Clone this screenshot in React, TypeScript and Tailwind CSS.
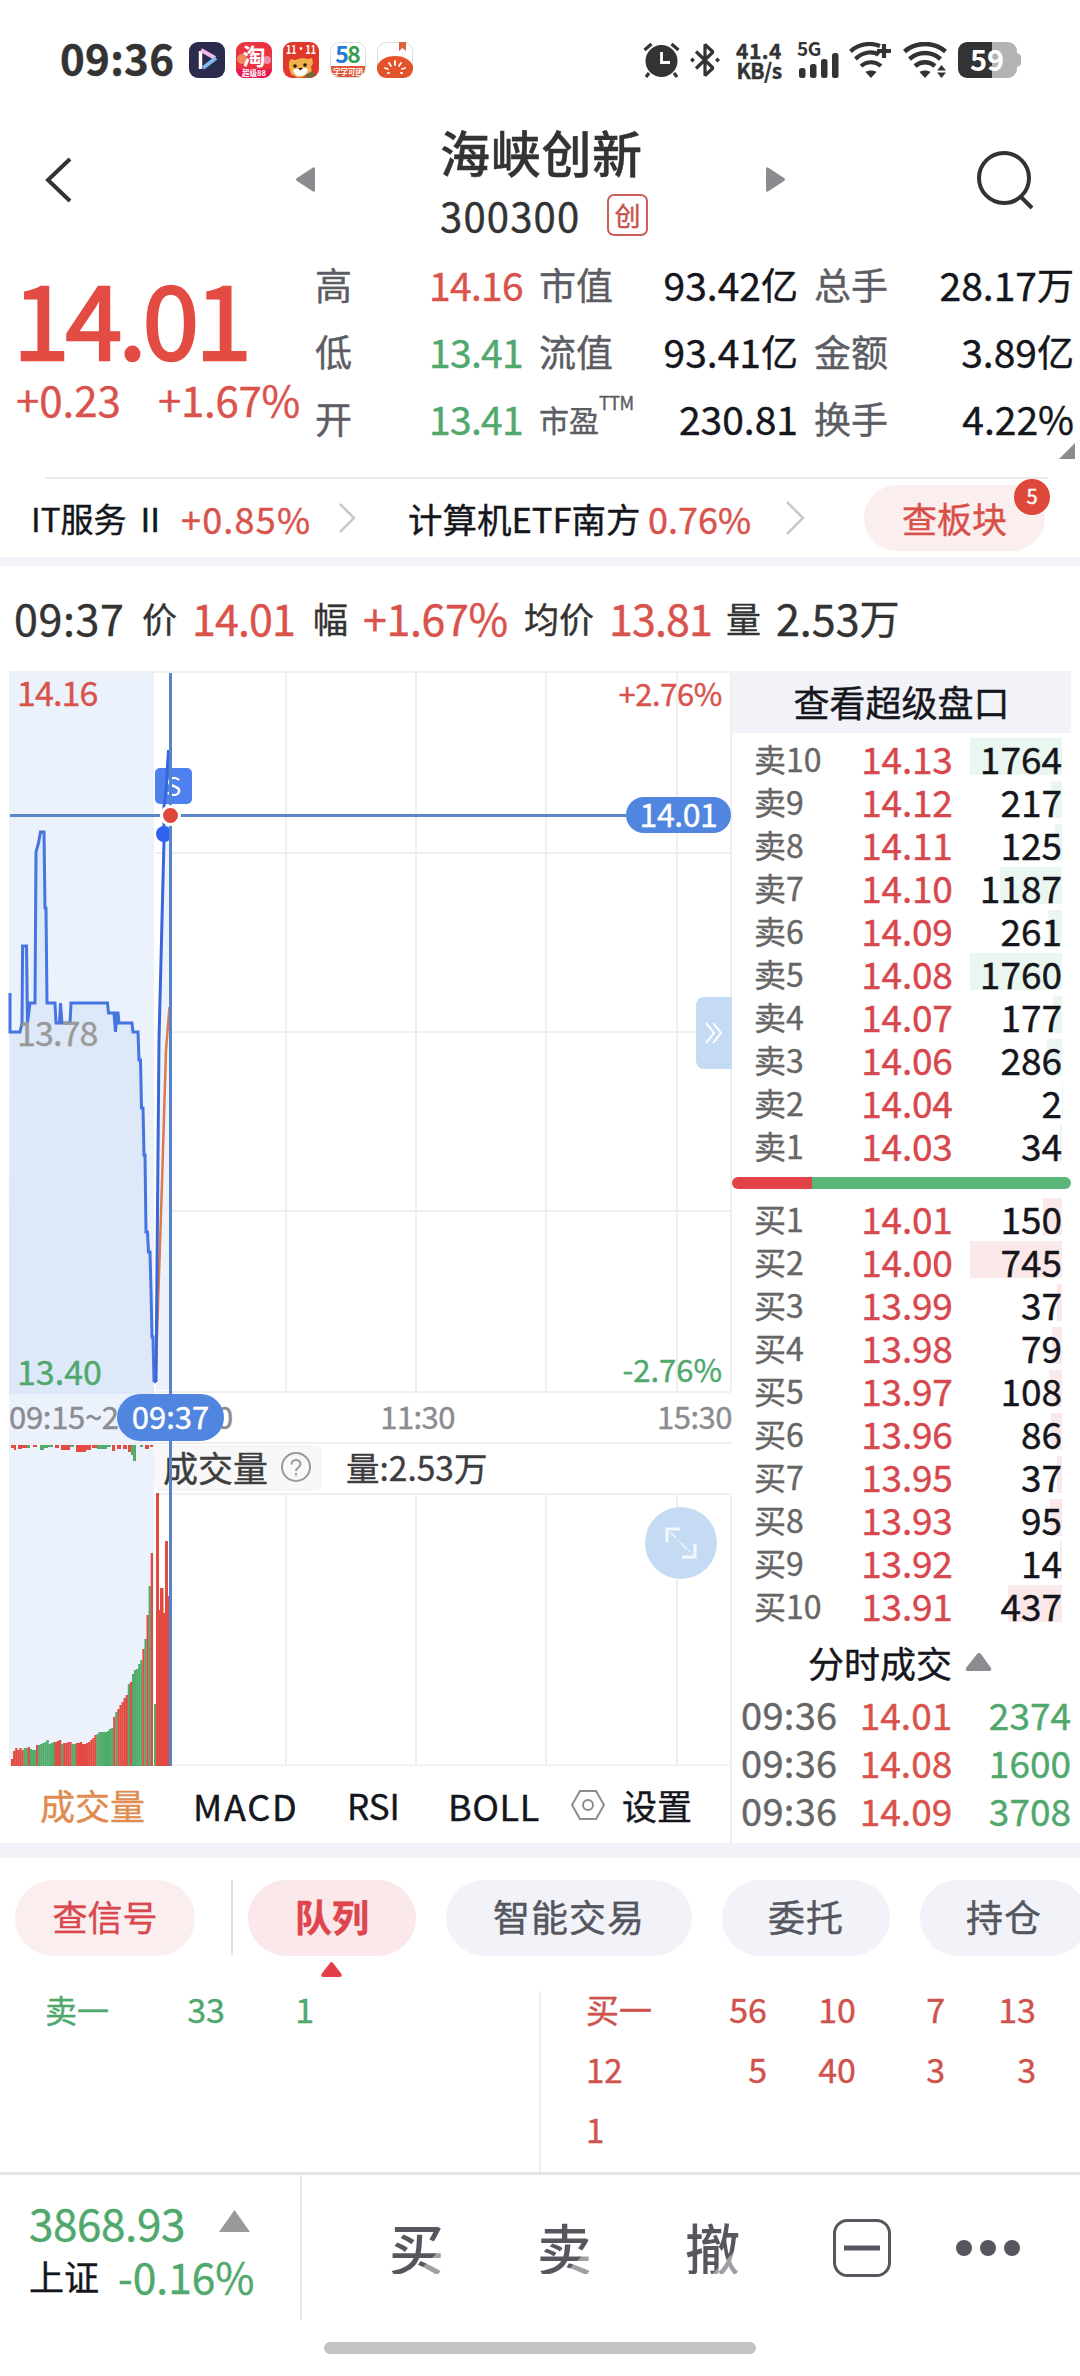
import type { ReactNode } from "react";
import clsx from "clsx";

interface Level {
  label: string;
  price: string;
  qty: number;
}

const sells: Level[] = [
  { label: "卖10", price: "14.13", qty: 1764 },
  { label: "卖9", price: "14.12", qty: 217 },
  { label: "卖8", price: "14.11", qty: 125 },
  { label: "卖7", price: "14.10", qty: 1187 },
  { label: "卖6", price: "14.09", qty: 261 },
  { label: "卖5", price: "14.08", qty: 1760 },
  { label: "卖4", price: "14.07", qty: 177 },
  { label: "卖3", price: "14.06", qty: 286 },
  { label: "卖2", price: "14.04", qty: 2 },
  { label: "卖1", price: "14.03", qty: 34 },
];

const buys: Level[] = [
  { label: "买1", price: "14.01", qty: 150 },
  { label: "买2", price: "14.00", qty: 745 },
  { label: "买3", price: "13.99", qty: 37 },
  { label: "买4", price: "13.98", qty: 79 },
  { label: "买5", price: "13.97", qty: 108 },
  { label: "买6", price: "13.96", qty: 86 },
  { label: "买7", price: "13.95", qty: 37 },
  { label: "买8", price: "13.93", qty: 95 },
  { label: "买9", price: "13.92", qty: 14 },
  { label: "买10", price: "13.91", qty: 437 },
];

const trades = [
  { time: "09:36", price: "14.01", qty: "2374" },
  { time: "09:36", price: "14.08", qty: "1600" },
  { time: "09:36", price: "14.09", qty: "3708" },
];

const buyQueue = [
  ["买一", "56", "10", "7", "13"],
  ["12", "5", "40", "3", "3"],
  ["1", "", "", "", ""],
];

// Call auction volume: bar heights and their colours (r = up, g = down)
const auctionHeights = [
  7, 15, 18, 16, 18, 16, 18, 18, 19, 17, 16, 16, 21, 21, 22, 23, 24, 26, 22, 23,
  24, 24, 25, 26, 22, 23, 23, 24, 24, 22, 22, 23, 23, 24, 22, 22, 23, 24, 26, 28,
  31, 32, 34, 34, 34, 34, 35, 37, 38, 49, 54, 57, 61, 64, 68, 71, 82, 84, 92, 96,
  97, 102, 106, 117, 127, 151, 180, 213,
];
const auctionColors =
  "rrrrrrggrgggrggggggggrrrgrrrrggrrrrrrrrrrggggggggrgrrrrrgrgggggrgrgr";

// Unmatched volume hanging from the top edge
const unmatched: [number, number, number, string][] = [
  [11, 4, 3, "r"], [14, 2, 5, "r"], [18, 4, 4, "r"], [22, 5, 3, "r"],
  [27, 3, 3, "g"], [33, 4, 2, "r"], [40, 4, 5, "g"], [44, 4, 3, "g"],
  [48, 5, 2, "g"], [55, 4, 3, "r"], [61, 9, 5, "r"], [70, 4, 2, "g"],
  [76, 10, 7, "r"], [86, 5, 5, "r"], [92, 5, 3, "r"], [97, 10, 4, "g"],
  [107, 4, 2, "g"], [112, 3, 6, "r"], [117, 4, 4, "r"], [123, 4, 4, "r"],
  [128, 3, 7, "r"], [131, 2, 10, "g"], [133, 3, 16, "g"], [140, 3, 2, "g"],
  [145, 4, 4, "r"], [150, 3, 2, "r"],
];

const hue = (c: string) => (c === "r" ? "#e34b42" : "#51ac6c");

function StatusBar() {
  return (
    <div className="flex h-[120px] items-center pl-[60px] text-[#333]">
      <div className="w-[129px] text-[42px] leading-none font-semibold tracking-[0.3px] -translate-y-[3px]">
        09:36
      </div>
      <div className="flex gap-[11px]">
        <svg width="36" height="36" viewBox="0 0 36 36">
          <rect width="36" height="36" rx="9" fill="#2a2b4d" />
          <path d="M11.500 9v18" stroke="#fff" strokeWidth="3.500" />
          <path d="M12 8l14 8" stroke="#f0b9e6" strokeWidth="4" />
          <path d="M27 16L14 26" stroke="#7fb9f2" strokeWidth="4" />
        </svg>
        <svg width="36" height="36" viewBox="0 0 36 36">
          <rect width="36" height="36" rx="9" fill="#ea3340" />
          <circle cx="6" cy="17" r="5" fill="#f08a5a" />
          <circle cx="31" cy="18" r="4" fill="#f08ab0" />
          <path d="M0 27h36a9 9 0 0 1-9 9H9a9 9 0 0 1-9-9z" fill="#e8174f" />
          <text x="18" y="23" fontSize="23" fontWeight="700" fill="#fff" textAnchor="middle">
            淘
          </text>
          <text x="18" y="34" fontSize="7.500" fontWeight="700" fill="#fff" textAnchor="middle">
            超级88
          </text>
        </svg>
        <svg width="36" height="36" viewBox="0 0 36 36">
          <rect width="36" height="36" rx="9" fill="#e2382c" />
          <text x="18" y="12" fontSize="12" fontWeight="700" fill="#fff" textAnchor="middle" textLength="30" lengthAdjust="spacingAndGlyphs">
            11·11
          </text>
          <path d="M6 20l2-3 4 1 7-2 6 1 4-1 1 5-2 4 1 5-5 4-9 2-7-4-2-6z" fill="#f0b04a" />
          <path d="M10 28c3-2 12-3 15-1-1 5-4 7-8 7s-6-2-7-6z" fill="#fff" />
          <circle cx="12" cy="24" r="1.800" fill="#2b1a12" />
          <circle cx="22" cy="23" r="1.800" fill="#2b1a12" />
          <path d="M15 26h5l-2.500 2.500z" fill="#2b1a12" />
          <path d="M21 34l8-5 4 4-6 3z" fill="#6b6a3c" />
        </svg>
        <svg width="36" height="36" viewBox="0 0 36 36">
          <rect x=".5" y=".5" width="35" height="35" rx="9" fill="#fff" stroke="#ddd" />
          <path d="M1 24h34v3a9 9 0 0 1-9 8H10a9 9 0 0 1-9-8z" fill="#dd5637" />
          <text x="12" y="21" fontSize="23" fontWeight="700" fill="#2479d8" textAnchor="middle">
            5
          </text>
          <text x="24" y="21" fontSize="23" fontWeight="700" fill="#36a14a" textAnchor="middle">
            8
          </text>
          <text x="18" y="33" fontSize="7.500" fontWeight="700" fill="#fff" textAnchor="middle">
            字字可团
          </text>
        </svg>
        <svg width="36" height="36" viewBox="0 0 36 36">
          <rect x=".5" y=".5" width="35" height="35" rx="9" fill="#fff" stroke="#ddd" />
          <path d="M22 0h7v9l-3.500-3-3.500 3z" fill="#d8623c" />
          <path d="M0 24c3-7 10-10 18-10s15 3 18 10v2c0 6-4 10-10 10H10C4 36 0 32 0 26z" fill="#e2532b" />
          <path
            d="M18 19v4M12 21l2 3M24 21l-2 3M8 26l3 1M28 26l-3 1M11 31h1M25 31h-1"
            stroke="#fff"
            strokeWidth="1.800"
            strokeLinecap="round"
          />
        </svg>
      </div>
      <div className="ml-[230px] flex items-center">
        {/* Alarm */}
        <svg width="37" height="36" viewBox="0 0 37 36" fill="none" stroke="#333">
          <circle cx="18.500" cy="19" r="16" fill="#333" stroke="none" />
          <path d="M1.500 8l7-6M35.500 8l-7-6M6 31l-3 4M31 31l3 4" strokeWidth="3.200" />
          <path d="M18.500 10v10.500h8.500" stroke="#fff" strokeWidth="2.800" />
        </svg>
        {/* Bluetooth */}
        <svg className="ml-[10px]" width="30" height="36" viewBox="0 0 30 36" fill="none" stroke="#333">
          <path d="M6 9.500L23 26l-8 7.500v-31l8 7.500L6 26.500" strokeWidth="3.200" strokeLinejoin="bevel" />
          <path d="M2.500 15.500l2.500 2.500-2.500 2.500L0 18zM27.500 15.500l2.500 2.500-2.500 2.500-2.500-2.500z" fill="#333" stroke="none" />
        </svg>
        <div className="ml-[15px] w-[48px] text-center text-[21px] leading-[20px] font-bold whitespace-nowrap">
          <div className="tracking-[0.5px]">41.4</div>
          <div className="tracking-[-0.5px]">KB/s</div>
        </div>
        {/* Signal */}
        <svg className="ml-[14px]" width="43" height="36" viewBox="0 0 43 36" fill="#333">
          <text x="0" y="14" fontSize="19" fontWeight="700" letterSpacing="-0.500">
            5G
          </text>
          <rect x="2" y="26" width="6.500" height="10" rx="2.500" />
          <rect x="13" y="22" width="6.500" height="14" rx="2.500" />
          <rect x="24" y="17" width="6.500" height="19" rx="2.500" />
          <rect x="35" y="11" width="6.500" height="25" rx="2.500" />
        </svg>
        {/* Wifi plus */}
        <svg className="ml-[9px]" width="44" height="36" viewBox="0 0 44 36" fill="none" stroke="#333" strokeWidth="4.200">
          <path d="M1.500 9.500C7 4 14 2 21 2c4 0 7 .8 10 2" />
          <path d="M6.500 17c8-8 19-8 23-4" />
          <path d="M12 24c6-5 14-5 20 0" />
          <path d="M16.500 30c3-2 8-2 11 0L22 36z" fill="#333" stroke="none" />
          <path d="M35 2v14M28 9h14" />
        </svg>
        {/* Wifi traffic */}
        <svg className="ml-[10px]" width="45" height="36" viewBox="0 0 45 36" fill="none" stroke="#333" strokeWidth="4.500">
          <path d="M1.500 9.500C13-.500 31-.500 42.500 9.500" />
          <path d="M6.500 17c9-8 22-8 31 0" />
          <path d="M12 24c6-5 14-5 20 0" />
          <path d="M16.500 30c3-2 8-2 11 0L22 36z" fill="#333" stroke="none" />
          <path d="M38.500 23l4.500 5.500h-9zM38.500 36l4.500-5.500h-9z" fill="#333" stroke="none" />
        </svg>
        <svg className="ml-[10px]" width="63" height="36" viewBox="0 0 63 36">
          <path d="M34 0h16a9 9 0 0 1 9 9v2c3 1 4 2 4 4v6c0 2-1 3-4 4v2a9 9 0 0 1-9 9H34z" fill="#b3b3b3" />
          <path d="M9 0h25v36H9a9 9 0 0 1-9-9V9a9 9 0 0 1 9-9z" fill="#333" />
          <text x="29" y="28.500" fontSize="29" fontWeight="700" fill="#fff" textAnchor="middle">
            59
          </text>
        </svg>
      </div>
    </div>
  );
}

function Header() {
  return (
    <div className="flex h-[134px] items-start text-[#333]">
      <svg className="mt-[37px] ml-[44px]" width="28" height="46" viewBox="0 0 28 46" fill="none" stroke="#333" strokeWidth="4">
        <path d="M26 2L4 23l22 21" />
      </svg>
      <svg className="mt-[46px] ml-[223px]" width="21" height="27" viewBox="0 0 21 27">
        <path d="M18 1.500Q20 .5 20 3v21q0 2.500-2 1.500L2 15Q0 13.500 2 12z" fill="#8b8b90" />
      </svg>
      <div className="ml-[124px] w-[325px]">
        <div className="mt-[6px] text-[50px] leading-[50px] font-medium tracking-[0.7px]">海峡创新</div>
        <div className="mt-[18px] flex items-center">
          <span className="w-[167px] text-[40px] leading-[42px] tracking-[1.2px]">300300</span>
          <span className="flex h-[42px] w-[41px] items-center justify-center rounded-[7px] border-2 border-[#c9605a] text-[26px] leading-none text-[#c9504a]">
            创
          </span>
        </div>
      </div>
      <svg className="mt-[46px]" width="21" height="27" viewBox="0 0 21 27">
        <path d="M3 1.500Q1 .5 1 3v21q0 2.500 2 1.500L19 15q2-1.500 0-3z" fill="#8b8b90" />
      </svg>
      <svg className="mt-[30px] ml-[191px]" width="60" height="60" viewBox="0 0 60 60" fill="none" stroke="#333" strokeWidth="4">
        <circle cx="27" cy="28" r="25" />
        <path d="M43 46l12 12" />
      </svg>
    </div>
  );
}

function Stat({
  label,
  value,
  unit,
  width,
  tone = "text-[#15161c]",
}: {
  label: ReactNode;
  value: string;
  unit?: string;
  width: string;
  tone?: string;
}) {
  return (
    <div className={clsx("flex h-[67px] items-center justify-between whitespace-nowrap", width)}>
      <span className="text-[37px] text-[#5c5d64]">{label}</span>
      <span className={clsx("flex items-center text-[39px]", tone)}>
        {value}
        {unit && <span className="text-[37px]">{unit}</span>}
      </span>
    </div>
  );
}

function Quote() {
  return (
    <div className="relative flex h-[223px]">
      <div className="w-[315px] pl-[13px] text-[#e34c43]">
        <div className="mt-[14px] h-[96px] text-[102px] leading-[96px] tracking-[-4px] [-webkit-text-stroke:2.5px]">
          14.01
        </div>
        <div className="mt-[11px] flex pl-[3px] text-[42px] leading-[48px] text-[#d9534c]">
          <span className="w-[142px]">+0.23</span>
          <span className="tracking-[-0.3px]">+1.67%</span>
        </div>
      </div>
      <div className="-mt-[3px] leading-none">
        <Stat width="w-[208px]" label="高" value="14.16" tone="text-[#d9534c] tracking-[-0.7px]" />
        <Stat width="w-[208px]" label="低" value="13.41" tone="text-[#51a86d] tracking-[-0.7px]" />
        <Stat width="w-[208px]" label="开" value="13.41" tone="text-[#51a86d] tracking-[-0.7px]" />
      </div>
      <div className="-mt-[3px] ml-[16px] leading-none">
        <Stat width="w-[259px]" label="市值" value="93.42" unit="亿" />
        <Stat width="w-[259px]" label="流值" value="93.41" unit="亿" />
        <Stat
          width="w-[259px]"
          label={
            <span className="flex items-start text-[30px]">
              市盈<span className="-mt-[11px] text-[18px] tracking-[-0.5px]">TTM</span>
            </span>
          }
          value="230.81"
        />
      </div>
      <div className="-mt-[3px] ml-[16px] leading-none">
        <Stat width="w-[260px]" label="总手" value="28.17" unit="万" />
        <Stat width="w-[260px]" label="金额" value="3.89" unit="亿" />
        <Stat width="w-[260px]" label="换手" value="4.22%" />
      </div>
      <svg className="absolute top-[189px] right-[5px]" width="16" height="16">
        <path d="M16 0v16H0z" fill="#8b8b90" />
      </svg>
    </div>
  );
}

function Sectors() {
  return (
    <>
      <div className="mr-[32px] ml-[45px] h-[2px] bg-[#ebebed]" />
      <div className="relative flex h-[78px] items-center pl-[31px] text-[36px] leading-none whitespace-nowrap text-[#15161c]">
        <span className="w-[150px] text-[33px]">IT服务 Ⅱ</span>
        <span className="w-[157px] tracking-[1.2px] text-[#d9534c]">+0.85%</span>
        <svg width="20" height="32" fill="none" stroke="#c9c9cc" strokeWidth="2.500">
          <path d="M2 2l14 14L2 30" />
        </svg>
        <span className="ml-[50px] w-[240px] text-[34.500px]">计算机ETF南方</span>
        <span className="w-[137px] text-[#d9534c]">0.76%</span>
        <svg width="22" height="36" fill="none" stroke="#c9c9cc" strokeWidth="2.500">
          <path d="M2 2l16 16L2 34" />
        </svg>
        <span className="ml-[57px] flex h-[66px] w-[181px] items-center justify-center rounded-full bg-[#fbeeee] pb-[2px] text-[35px] text-[#d9504a]">
          查板块
        </span>
        <span className="absolute top-[0px] right-[30px] flex size-[36px] items-center justify-center rounded-full bg-[#dd483b] pb-[2px] text-[20px] text-white">
          5
        </span>
      </div>
      <div className="h-[9px] bg-[#f2f3f8]" />
    </>
  );
}

function InfoLine() {
  return (
    <div className="flex h-[105px] items-center pb-[3px] pl-[14px] text-[43px] leading-none whitespace-nowrap text-[#333]">
      <span className="w-[128px] tracking-[0.6px]">09:37</span>
      <span className="w-[50px] text-[35px]">价</span>
      <span className="w-[121px] tracking-[-0.9px] text-[#d9534c]">14.01</span>
      <span className="w-[50px] text-[35px]">幅</span>
      <span className="w-[161px] tracking-[-0.4px] text-[#d9534c]">+1.67%</span>
      <span className="w-[85px] text-[35px]">均价</span>
      <span className="w-[117px] tracking-[-0.9px] text-[#d9534c]">13.81</span>
      <span className="w-[50px] text-[35px]">量</span>
      <span className="flex items-center">
        2.53<span className="text-[40px]">万</span>
      </span>
    </div>
  );
}

const priceLine =
  "10,993 10,1032 20,1032 22,1023 22.600,946 26.500,946 27.500,1023 30,1003 35,1003 36,852 38.500,843 40.500,832 44,832 45,908 46,908 47,1003 55,1003 56,1023 59.500,1023 60.500,1003 62,1023 70,1023 71,1003 107.500,1003 108.500,1013 114,1013 115.500,1032 117,1013 118,1013 119,1023 132,1023 133,1032 138,1032 139,1060 140.500,1060 141.500,1108 143,1108 144,1155 145,1155 146,1232 147.500,1232 148.500,1252 150,1252 151,1290 152,1337 153,1337 154,1382";
const openLine = "156,1382 159,1040 164,840 164,806 166,790 168.500,750";

function Chart() {
  return (
    <div className="relative h-[1095px] w-[732px]">
      <svg width="732" height="1095" viewBox="0 671 732 1095" fill="none">
        <rect x="9" y="671" width="145" height="1095" fill="#ebf2fc" />
        <g stroke="#efeff1" strokeWidth="2">
          <path d="M9 672H731M155 853H731M155 1032H731M155 1211H731M155 1392H731" />
          <path d="M286 672V1392M416 672V1392M546 672V1392M677 672V1392M731 672V1392" />
          <path d="M9 1443H732M155 1494H731M154 1765.500H731" />
          <path d="M286 1494V1766M416 1494V1766M546 1494V1766M677 1494V1766M731 1494V1766" />
        </g>
        <polygon points={`9,1394 ${priceLine} 154,1394`} fill="#dde8f9" />
        <path d="M156 1390L159 1040L164 840L170 750V1390z" fill="#ebf2fc" />
        <path d="M155.500 1382L162 1183L166 1050L169.500 1007" stroke="#dd7a45" strokeWidth="2.500" />
        <polyline points={priceLine} stroke="#4674e0" strokeWidth="3" />
        <path d="M154 1382h2" stroke="#4674e0" strokeWidth="2.600" />
        <rect x="155" y="768" width="37" height="36" rx="5" fill="#4f80f0" />
        <text x="173.500" y="796" fontSize="26" fill="#fff" textAnchor="middle">
          S
        </text>
        <polyline points={openLine} stroke="#3a66dc" strokeWidth="3" />
        <circle cx="164" cy="834" r="8" fill="#2f62ef" />
        {unmatched.map(([x, w, h, c]) => (
          <rect key={x} x={x} y={1445} width={w} height={h} fill={hue(c)} />
        ))}
        {auctionHeights.map((h, i) => (
          <rect key={i} x={11 + i * 2.085} y={1766 - h} width={2.3} height={h} fill={hue(auctionColors[i])} />
        ))}
        <rect x="154" y="1704" width="2" height="62" fill="#51ac6c" />
        <path
          d="M156 1766V1493h3V1610h1V1588h3.500V1613h1.500V1541h3V1596h2V1766z"
          fill="#e34b42"
        />
        <rect x="155" y="1446" width="166" height="44" rx="6" fill="#f8f8f9" stroke="#f1f1f2" />
        <path d="M10 815.500H627" stroke="#5b87c9" strokeWidth="3" />
      </svg>

      {/* Price labels */}
      <div className="absolute top-[4px] left-[17px] text-[34px] leading-[34px] tracking-[-0.9px] text-[#d9534c]">14.16</div>
      <div className="absolute top-[5px] right-[10px] text-[31px] leading-[34px] tracking-[-0.4px] text-[#d9534c]">+2.76%</div>
      <div className="absolute top-[344px] left-[17px] text-[34px] leading-[34px] tracking-[-0.9px] text-[#999]">13.78</div>
      <div className="absolute top-[683px] left-[17px] text-[34px] leading-[34px] text-[#51a86d]">13.40</div>
      <div className="absolute top-[681px] right-[10px] text-[31px] leading-[34px] text-[#51a86d]">-2.76%</div>

      {/* Time axis */}
      <div className="absolute top-[723px] right-0 left-[9px] flex h-[47px] items-center justify-between pb-[4px] text-[31px] leading-none text-[#8b8b90]">
        <span className="flex w-[224px] justify-between tracking-[-0.3px]">
          <span>09:15~25</span>
          <span>09:30</span>
        </span>
        <span className="mr-[55px] tracking-[-0.6px]">11:30</span>
        <span className="tracking-[-0.5px]">15:30</span>
      </div>

      <div className="absolute top-[778px] left-[163px] flex items-center text-[35px] leading-[36px] text-[#3d3d3f]">
        <span className="w-[118px]">成交量</span>
        <svg width="30" height="30" viewBox="0 0 30 30" fill="none" stroke="#999" strokeWidth="2">
          <circle cx="15" cy="15" r="14" />
          <path d="M10.500 12.500c0-6 9-6 9-.5 0 3.500-4.500 3.500-4.500 7M15 21v2.500" />
        </svg>
        <span className="ml-[35px] text-[33.500px]">量:2.53万</span>
      </div>

      {/* Crosshair */}
      <div className="absolute top-[2px] left-[169px] h-[1093px] w-[3px] bg-[#5584cc]" />
      <div className="absolute top-[134px] left-[160px] size-[21px] rounded-full border-3 border-white bg-[#dd483b]" />
      <div className="absolute top-[126px] left-[626px] flex h-[36px] w-[105px] items-center justify-center rounded-full bg-[#5085e0] pb-[4px] text-[32px] leading-none tracking-[-0.4px] text-white">
        14.01
      </div>
      <div className="absolute top-[723px] left-[117px] flex h-[47px] w-[107px] items-center justify-center rounded-full bg-[#5085e0] pb-[4px] text-[31px] leading-none text-white">
        09:37
      </div>

      <div className="absolute top-[326px] right-0 flex h-[72px] w-[36px] items-center justify-center rounded-l-lg bg-[#c5dbf3]">
        <svg width="20" height="22" fill="none" stroke="#fff" strokeWidth="2">
          <path d="M2 1l8 10-8 10M9 1l8 10-8 10" />
        </svg>
      </div>
      <div className="absolute top-[836px] left-[645px] flex size-[72px] items-center justify-center rounded-full bg-[#c5dbf3]">
        <svg width="34" height="34" fill="none" stroke="#fff">
          <path d="M16 3H3V16M18 31H31V18" strokeWidth="3" opacity=".8" />
          <path d="M6 6l22 22" strokeWidth="1.500" strokeDasharray="9 2 2 2" opacity=".7" />
        </svg>
      </div>
    </div>
  );
}

function IndicatorTabs() {
  return (
    <div className="flex h-[77px] w-[732px] items-center border-r-2 border-[#efeff1] pl-[40px] text-[36px] leading-none text-[#15161c]">
      <span className="w-[153px] text-[35px] text-[#e08b50]">成交量</span>
      <span className="w-[154px] tracking-[1.8px]">MACD</span>
      <span className="w-[101px] text-[35px]">RSI</span>
      <span className="w-[123px] tracking-[0.6px]">BOLL</span>
      <svg className="mt-[1px]" width="34" height="32" viewBox="0 0 34 32" fill="none" stroke="#8b8b90" strokeWidth="2">
        <path d="M9 2h16l8 14-8 14H9L1 16z" />
        <circle cx="17" cy="16" r="5" />
      </svg>
      <span className="ml-[17px] text-[35px]">设置</span>
    </div>
  );
}

function BookRow({ level, max, fill }: { level: Level; max: number; fill: string }) {
  return (
    <div className="flex h-[43px] items-start pl-[22px] whitespace-nowrap">
      <span className="w-[86px] pt-px text-[32px] leading-[38px] text-[#666]">{level.label}</span>
      <span className="w-[134px] pt-px text-center text-[37px] leading-[38px] tracking-[-0.2px] text-[#d7484e]">
        {level.price}
      </span>
      <span className="relative h-[37px] w-[88px] pt-px text-right text-[37px] leading-[38px] text-[#15161c]">
        <span
          className={clsx("absolute top-0 right-0 h-[37px]", fill)}
          style={{ width: (level.qty / max) * 92 }}
        />
        <span className="relative">{level.qty}</span>
      </span>
    </div>
  );
}

function OrderBook() {
  return (
    <div className="h-[1172px] w-[348px] pr-[9px]">
      <div className="flex h-[62px] items-center justify-center bg-[#f2f3f8] pb-[2px] text-[36px] leading-none text-[#15161c]">
        查看超级盘口
      </div>
      <div className="mt-[5px]">
        {sells.map((s) => (
          <BookRow key={s.label} level={s} max={1764} fill="bg-[#eaf6f0]" />
        ))}
      </div>
      <div className="mt-[9px] flex h-[12px] overflow-hidden rounded-full">
        <div className="w-[80px] bg-[#e34348]" />
        <div className="flex-1 bg-[#5bb679]" />
      </div>
      <div className="mt-[9px]">
        {buys.map((b) => (
          <BookRow key={b.label} level={b} max={745} fill="bg-[#fbe9ea]" />
        ))}
      </div>
      <div className="mt-[5px] flex h-[57px] items-center pl-[76px] text-[36px] leading-none text-[#15161c]">
        <span className="w-[157px]">分时成交</span>
        <svg width="28" height="20" viewBox="0 0 28 20">
          <path d="M12 2q2-2 4 0l10 14q1 3-2 3H3q-3 0-2-3z" fill="#8b8b90" />
        </svg>
      </div>
      {trades.map((t) => (
        <div key={t.price} className="flex h-[48px] items-center pl-[9px] text-[37px] leading-none">
          <span className="w-[100px] text-[38px] tracking-[0.3px] text-[#666]">{t.time}</span>
          <span className="w-[130px] text-center text-[#d9534c]">{t.price}</span>
          <span className="flex-1 text-right text-[#51a86d]">{t.qty}</span>
        </div>
      ))}
    </div>
  );
}

function Chips() {
  return (
    <div className="flex h-[98px] items-start pt-[22px] pl-[15px] text-[37px] leading-[72px] whitespace-nowrap text-[#55565e]">
      <span className="h-[76px] w-[180px] shrink-0 rounded-full bg-[#fbeeee] text-center text-[35px] text-[#d9484e]">查信号</span>
      <span className="ml-[36px] h-[75px] w-[2px] shrink-0 bg-[#e0e0e2]" />
      <span className="ml-[15px] h-[76px] w-[168px] shrink-0 rounded-full bg-[#fae8ea] text-center font-bold text-[#df454c]">队列</span>
      <span className="ml-[30px] h-[76px] w-[246px] shrink-0 rounded-full bg-[#f2f3f8] text-center tracking-[1px]">智能交易</span>
      <span className="ml-[30px] h-[76px] w-[168px] shrink-0 rounded-full bg-[#f2f3f8] text-center tracking-[1px]">委托</span>
      <span className="ml-[30px] h-[76px] w-[168px] shrink-0 rounded-full bg-[#f2f3f8] text-center tracking-[1px]">持仓</span>
    </div>
  );
}

function Queue() {
  return (
    <div className="flex h-[216px] flex-col">
      <svg className="mt-[5px] ml-[320px]" width="23" height="17" viewBox="0 0 23 17">
        <path d="M10 2q1.500-2 3 0l8.500 11q1 3-2 3H3.500q-3 0-2-3z" fill="#e43f47" />
      </svg>
      <div className="mt-[13px] flex h-[181px] text-[34px] leading-[36px]">
        <div className="flex w-[541px] border-r-2 border-[#f0f0f2] pl-[45px] text-[#51a86d]">
          <span className="w-[68px] text-[32px]">卖一</span>
          <span className="w-[112px] text-right">33</span>
          <span className="w-[89px] text-right">1</span>
        </div>
        <div className="pl-[45px] text-[#cf534c]">
          {buyQueue.map((row, i) => (
            <div key={i} className="flex h-[60px]">
              <span className="w-[90px] text-[33px]">{row[0]}</span>
              <span className="w-[91px] text-right">{row[1]}</span>
              <span className="w-[89px] text-right">{row[2]}</span>
              <span className="w-[89px] text-right">{row[3]}</span>
              <span className="w-[91px] text-right">{row[4]}</span>
            </div>
          ))}
        </div>
      </div>
    </div>
  );
}

function BottomBar() {
  return (
    <div className="flex h-[204px] flex-col border-t-3 border-[#e4e4e6]">
      <div className="flex h-[145px]">
        <div className="w-[302px] border-r-2 border-[#e9e9eb] pt-[22px] pl-[29px]">
          <div className="flex items-center text-[44px] leading-[50px] text-[#51a86d]">
            <span className="w-[190px] tracking-[-0.4px]">3868.93</span>
            <svg className="-mt-[2px]" width="31" height="22">
              <path d="M15.500 0L31 22H0z" fill="#999" />
            </svg>
          </div>
          <div className="mt-[4px] flex items-center leading-[50px]">
            <span className="w-[89px] text-[35px] text-[#15161c]">上证</span>
            <span className="text-[42.500px] text-[#51a86d]">-0.16%</span>
          </div>
        </div>
        <div className="flex items-center pl-[87px] text-[55px] leading-none font-medium">
          {["买", "卖", "撤"].map((t) => (
            <span
              key={t}
              className="mr-[93px] -mt-[3px] bg-linear-[135deg,#55565e_74%,#a0a0a4_75%] bg-clip-text text-transparent [-webkit-text-stroke:0]"
            >
              {t}
            </span>
          ))}
          <svg width="58" height="58" fill="none" stroke="#55565e" strokeWidth="3">
            <rect x="1.500" y="1.500" width="55" height="55" rx="13" />
            <path d="M11 29h36" strokeWidth="5" />
          </svg>
          <svg className="ml-[65px]" width="64" height="16" fill="#55565e">
            <circle cx="8" cy="8" r="8" />
            <circle cx="32" cy="8" r="8" />
            <circle cx="56" cy="8" r="8" />
          </svg>
        </div>
      </div>
      <div className="mx-auto mt-[22px] h-[12px] w-[432px] rounded-full bg-[#c3c3c4]" />
    </div>
  );
}

export default function App() {
  return (
    <div className="flex h-[2376px] w-[1080px] flex-col overflow-hidden bg-white font-['Noto_Sans_CJK_SC',sans-serif] [-webkit-text-stroke:0.4px]">
      <StatusBar />
      <Header />
      <Quote />
      <Sectors />
      <InfoLine />
      <div className="flex">
        <div>
          <Chart />
          <IndicatorTabs />
        </div>
        <OrderBook />
      </div>
      <div className="h-[15px] shrink-0 bg-[#f2f3f8]" />
      <Chips />
      <Queue />
      <BottomBar />
    </div>
  );
}
